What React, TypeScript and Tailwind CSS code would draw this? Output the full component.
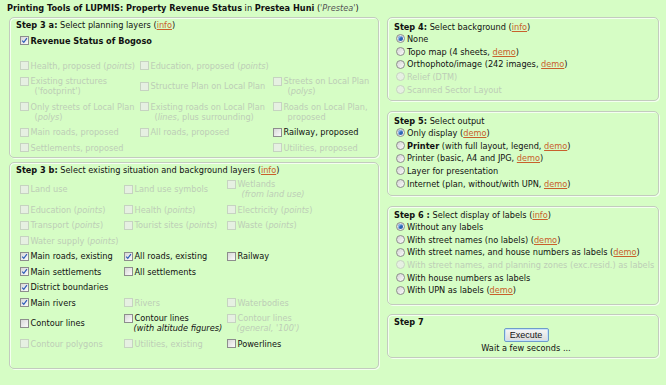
import React from 'react';
import clsx from 'clsx';

type Cell = {
  label?: React.ReactNode;
  sub?: React.ReactNode;
  indent?: boolean;
  checked?: boolean;
  disabled?: boolean;
};

const Link = ({ children }: { children: React.ReactNode }) => (
  <span className="text-[#c8602c] underline">{children}</span>
);

function CheckBox({ checked, disabled }: { checked?: boolean; disabled?: boolean }) {
  return (
    <span
      className={clsx(
        'relative block w-[9px] h-[9px] shrink-0 border',
        disabled
          ? 'border-[#c6d3c1] bg-[#e6f0e2]'
          : 'border-[#8d8d8d] bg-linear-to-br from-[#d8d8d8] to-[#fbfbfb]'
      )}
    >
      {checked && (
        <svg viewBox="0 0 9 9" className="absolute -left-px -top-px w-[9px] h-[9px]">
          <path d="M2.2 4.6 L3.8 6.4 L6.9 2.2" fill="none" stroke="#2a5cb8" strokeWidth="1.2" />
        </svg>
      )}
    </span>
  );
}

function Radio({ on, disabled }: { on?: boolean; disabled?: boolean }) {
  return (
    <span
      className={clsx(
        'relative flex items-center justify-center w-[9px] h-[9px] shrink-0 rounded-full border',
        disabled
          ? 'border-[#c6d3c1] bg-[#e6f0e2]'
          : 'border-[#8d8d8d] bg-linear-to-br from-[#d4d4d4] to-[#fbfbfb]'
      )}
    >
      {on && <span className="w-[5px] h-[5px] rounded-full bg-[#2d64b4] shadow-[inset_1px_1px_1px_#9cc4f0]" />}
    </span>
  );
}

function GridCell({ c }: { c?: Cell }) {
  if (!c || !c.label) return <div />;
  const dim = c.disabled;
  return (
    <div className="flex items-start gap-[1.5px]">
      <span className="flex h-[10px] items-center">
        <CheckBox checked={c.checked} disabled={dim} />
      </span>
      <div className={clsx('whitespace-nowrap', dim ? 'text-[#bdcdb7]' : 'text-[#111]')}>
        <div>{c.label}</div>
        {c.sub && <div className={c.indent ? 'pl-[4px]' : '-ml-[1px]'}>{c.sub}</div>}
      </div>
    </div>
  );
}

const I = ({ children }: { children: React.ReactNode }) => <i>{children}</i>;

const planning: (Cell | undefined)[][] = [
  [
    { label: <>Health, proposed (<I>points</I>)</>, disabled: true },
    { label: <>Education, proposed (<I>points</I>)</>, disabled: true },
    undefined,
  ],
  [
    { label: 'Existing structures', sub: "('footprint')", indent: true, disabled: true },
    { label: 'Structure Plan on Local Plan', disabled: true },
    { label: 'Streets on Local Plan', sub: <>(<I>polys</I>)</>, indent: true, disabled: true },
  ],
  [
    { label: 'Only streets of Local Plan', sub: <>(<I>polys</I>)</>, indent: true, disabled: true },
    { label: 'Existing roads on Local Plan', sub: <>(<I>lines</I>, plus surrounding)</>, indent: true, disabled: true },
    { label: 'Roads on Local Plan,', sub: 'proposed', indent: true, disabled: true },
  ],
  [
    { label: 'Main roads, proposed', disabled: true },
    { label: 'All roads, proposed', disabled: true },
    { label: 'Railway, proposed' },
  ],
  [
    { label: 'Settlements, proposed', disabled: true },
    undefined,
    { label: 'Utilities, proposed', disabled: true },
  ],
];

const situation: (Cell | undefined)[][] = [
  [
    { label: 'Land use', disabled: true },
    { label: 'Land use symbols', disabled: true },
    { label: 'Wetlands', sub: <I>(from land use)</I>, indent: true, disabled: true },
  ],
  [
    { label: <>Education (<I>points</I>)</>, disabled: true },
    { label: <>Health (<I>points</I>)</>, disabled: true },
    { label: <>Electricity (<I>points</I>)</>, disabled: true },
  ],
  [
    { label: <>Transport (<I>points</I>)</>, disabled: true },
    { label: <>Tourist sites (<I>points</I>)</>, disabled: true },
    { label: <>Waste (<I>points</I>)</>, disabled: true },
  ],
  [{ label: <>Water supply (<I>points</I>)</>, disabled: true }, undefined, undefined],
  [
    { label: 'Main roads, existing', checked: true },
    { label: 'All roads, existing', checked: true },
    { label: 'Railway' },
  ],
  [{ label: 'Main settlements', checked: true }, { label: 'All settlements' }, undefined],
  [{ label: 'District boundaries', checked: true }, undefined, undefined],
  [
    { label: 'Main rivers', checked: true },
    { label: 'Rivers', disabled: true },
    { label: 'Waterbodies', disabled: true },
  ],
  [
    { label: 'Contour lines' },
    { label: 'Contour lines', sub: <I>(with altitude figures)</I> },
    { label: 'Contour lines', sub: <I>(general, '100')</I>, disabled: true },
  ],
  [
    { label: 'Contour polygons', disabled: true },
    { label: 'Utilities, existing', disabled: true },
    { label: 'Powerlines' },
  ],
];

function Panel({ className, children }: { className?: string; children: React.ReactNode }) {
  return (
    <div
      className={clsx(
        'border border-[#c3cbbf] rounded-[5px] shadow-[1px_1px_0_#f4fff0,inset_1px_1px_0_#f4fff0]',
        className
      )}
    >
      {children}
    </div>
  );
}

function RadioRow({ on, disabled, children }: { on?: boolean; disabled?: boolean; children: React.ReactNode }) {
  return (
    <div className={clsx('flex items-center gap-[2px] h-[12.7px] pl-[2px] whitespace-nowrap', disabled ? 'text-[#bdcdb7]' : 'text-[#111]')}>
      <Radio on={on} disabled={disabled} />
      <span>{children}</span>
    </div>
  );
}

export default function App() {
  return (
    <div className="w-[666px] h-[385px] overflow-hidden bg-[#d6fdc5] font-['DejaVu_Sans',sans-serif] text-[8.2px] leading-[10px] text-[#111]">
      <div className="pl-[7px] pt-[3px] h-[17px]">
        <b>Printing Tools of LUPMIS: Property Revenue Status</b> in <b>Prestea Huni</b> (
        <i className="text-[#555]">'Prestea'</i>)
      </div>

      <div className="flex items-start">
        {/* left column */}
        <div className="ml-[9px] w-[370px] flex flex-col gap-[4px]">
          <Panel className="pt-[2px] pl-[6px] h-[141px]">
            <div>
              <b>Step 3 a:</b> Select planning layers (<Link>info</Link>)
            </div>
            <div className="flex items-center gap-[1.5px] pl-[4px] mt-[3px] h-[15.5px]">
              <CheckBox checked />
              <b>Revenue Status of Bogoso</b>
            </div>
            <div className="mt-[9.5px] pl-[4px] grid grid-cols-[120px_133px_1fr] grid-rows-[15.5px_25.5px_25.5px_15.5px_15.5px] items-center">
              {planning.map((row, r) =>
                row.map((c, i) => <GridCell key={`${r}-${i}`} c={c} />)
              )}
            </div>
          </Panel>

          <Panel className="pt-[2px] pl-[6px] h-[207px]">
            <div>
              <b>Step 3 b:</b> Select existing situation and background layers (<Link>info</Link>)
            </div>
            <div className="mt-[1.5px] pl-[4px] grid grid-cols-[104px_103px_1fr] grid-rows-[25.5px_15.5px_15.5px_15.5px_15.5px_15.5px_15.5px_15.5px_25.5px_15.5px] items-center">
              {situation.map((row, r) =>
                row.map((c, i) => <GridCell key={`${r}-${i}`} c={c} />)
              )}
            </div>
          </Panel>
        </div>

        {/* right column */}
        <div className="ml-[8px] w-[272px] flex flex-col">
          <Panel className="pt-[4px] pl-[6px] h-[84px]">
            <div>
              <b>Step 4:</b> Select background (<Link>info</Link>)
            </div>
            <div className="mt-[0.5px]">
              <RadioRow on>None</RadioRow>
              <RadioRow>
                Topo map (4 sheets, <Link>demo</Link>)
              </RadioRow>
              <RadioRow>
                Orthophoto/image (242 images, <Link>demo</Link>)
              </RadioRow>
              <RadioRow disabled>Relief (DTM)</RadioRow>
              <RadioRow disabled>Scanned Sector Layout</RadioRow>
            </div>
          </Panel>

          <Panel className="mt-[10px] pt-[4px] pl-[6px] h-[85px]">
            <div>
              <b>Step 5:</b> Select output
            </div>
            <div className="mt-[0.5px]">
              <RadioRow on>
                Only display (<Link>demo</Link>)
              </RadioRow>
              <RadioRow>
                <b>Printer</b> (with full layout, legend, <Link>demo</Link>)
              </RadioRow>
              <RadioRow>
                Printer (basic, A4 and JPG, <Link>demo</Link>)
              </RadioRow>
              <RadioRow>Layer for presentation</RadioRow>
              <RadioRow>
                Internet (plan, without/with UPN, <Link>demo</Link>)
              </RadioRow>
            </div>
          </Panel>

          <Panel className="mt-[10px] pt-[3px] pl-[6px] h-[99px]">
            <div>
              <b>Step 6 :</b> Select display of labels (<Link>info</Link>)
            </div>
            <div className="mt-[0.5px]">
              <RadioRow on>Without any labels</RadioRow>
              <RadioRow>
                With street names (no labels) (<Link>demo</Link>)
              </RadioRow>
              <RadioRow>
                With street names, and house numbers as labels (<Link>demo</Link>)
              </RadioRow>
              <RadioRow disabled>With street names, and planning zones (exc.resid.) as labels</RadioRow>
              <RadioRow>With house numbers as labels</RadioRow>
              <RadioRow>
                With UPN as labels (<Link>demo</Link>)
              </RadioRow>
            </div>
          </Panel>

          <Panel className="mt-[9px] pt-[2px] pl-[6px] h-[44px]">
            <div>
              <b>Step 7</b>
            </div>
            <div className="flex flex-col items-center mt-[1px]">
              <button className="h-[14px] w-[45px] rounded-[2px] border border-[#6f9ccc] bg-linear-to-b from-[#f6f6f6] to-[#dcdcdc] shadow-[inset_0_0_0_1px_#c6e2fa] text-[9px] leading-[12px] font-['Liberation_Sans',sans-serif] text-[#111]">
                Execute
              </button>
              <div className="mt-[1px]">Wait a few seconds ...</div>
            </div>
          </Panel>
        </div>
      </div>
    </div>
  );
}
